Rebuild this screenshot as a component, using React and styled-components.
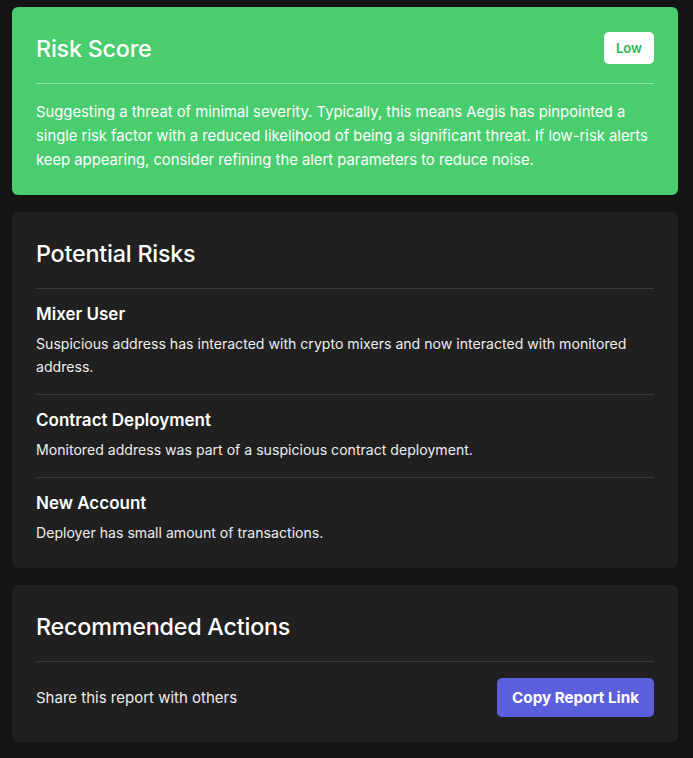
import React from "react";
import styled, { createGlobalStyle } from "styled-components";

const Global = createGlobalStyle`
  html, body { margin: 0; padding: 0; background: #141414; }
  body { font-family: Inter, "Noto Sans", sans-serif; color: #fff; -webkit-font-smoothing: antialiased; }
  * { box-sizing: border-box; }
`;

const Page = styled.div`
  display: flex;
  flex-direction: column;
  gap: 17px;
  padding: 7px 15px 16px 12px;
`;

const Card = styled.section`
  background: ${(p) => (p.$accent ? "#49cd6e" : "#202020")};
  border-radius: 6px;
  padding: 24px 24px ${(p) => p.$bottom || 24}px;
  display: flex;
  flex-direction: column;
`;

const Header = styled.div`
  display: flex;
  align-items: center;
  justify-content: space-between;
  height: 34px;
  margin-bottom: 18px;
`;

const Title = styled.h2`
  margin: 0;
  padding-top: 2px;
  font-size: 23.3px;
  font-weight: 500;
  line-height: 34px;
  letter-spacing: -0.2px;
`;

const Badge = styled.span`
  background: #fff;
  color: #2fb356;
  font-size: 13px;
  font-weight: 600;
  border-radius: 5px;
  height: 32px;
  padding: 0 12px;
  display: inline-flex;
  align-items: center;
`;

const Divider = styled.hr`
  border: 0;
  height: 1px;
  margin: 0;
  background: ${(p) => (p.$light ? "#8fe3a7" : "#3a3a3a")};
`;

const Paragraph = styled.p`
  margin: 16px 0 0;
  font-size: 14.8px;
  line-height: 24px;
`;

const Item = styled.div`
  padding: 14px 0 16px;
  &:last-child { padding-bottom: 0; }
`;

const ItemTitle = styled.h3`
  margin: 0 0 7px;
  font-size: 17px;
  font-weight: 600;
  line-height: 22px;
`;

const ItemText = styled.p`
  margin: 0;
  font-size: 14.1px;
  line-height: 23px;
  color: #ececec;
`;

const ActionRow = styled.div`
  display: flex;
  align-items: center;
  justify-content: space-between;
  margin-top: 16px;
`;

const ActionText = styled.span`
  font-size: 15px;
  color: #ececec;
`;

const Button = styled.button`
  background: #5b5fdc;
  color: #fff;
  border: 0;
  border-radius: 5px;
  height: 39px;
  padding: 0 15px;
  font-family: inherit;
  font-size: 15.2px;
  font-weight: 700;
  cursor: pointer;
`;

const risks = [
  {
    title: "Mixer User",
    text: "Suspicious address has interacted with crypto mixers and now interacted with monitored address.",
  },
  {
    title: "Contract Deployment",
    text: "Monitored address was part of a suspicious contract deployment.",
  },
  {
    title: "New Account",
    text: "Deployer has small amount of transactions.",
  },
];

export default function App() {
  return (
    <>
      <Global />
      <Page>
        <Card $accent $bottom={23}>
          <Header>
            <Title>Risk Score</Title>
            <Badge>Low</Badge>
          </Header>
          <Divider $light />
          <Paragraph>
            Suggesting a threat of minimal severity. Typically, this means Aegis has pinpointed a
            single risk factor with a reduced likelihood of being a significant threat. If low-risk
            alerts keep appearing, consider refining the alert parameters to reduce noise.
          </Paragraph>
        </Card>
        <Card>
          <Header>
            <Title>Potential Risks</Title>
          </Header>
          <Divider />
          {risks.map((r, i) => (
            <React.Fragment key={r.title}>
              {i > 0 && <Divider />}
              <Item>
                <ItemTitle>{r.title}</ItemTitle>
                <ItemText>{r.text}</ItemText>
              </Item>
            </React.Fragment>
          ))}
        </Card>
        <Card $bottom={25}>
          <Header>
            <Title>Recommended Actions</Title>
          </Header>
          <Divider />
          <ActionRow>
            <ActionText>Share this report with others</ActionText>
            <Button>Copy Report Link</Button>
          </ActionRow>
        </Card>
      </Page>
    </>
  );
}
